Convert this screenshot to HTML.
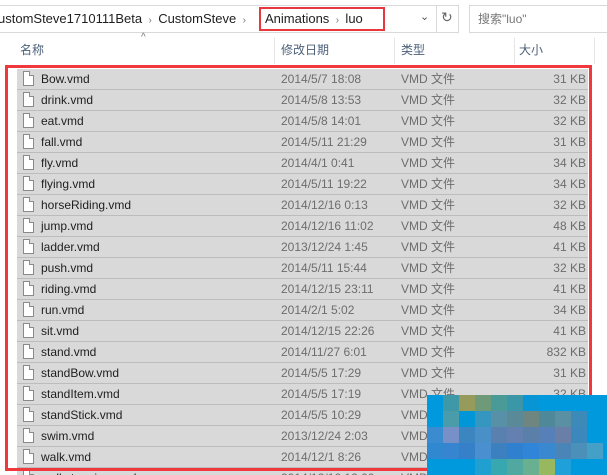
<!DOCTYPE html>
<html><head><meta charset="utf-8"><style>
*{margin:0;padding:0;box-sizing:border-box}
html,body{width:607px;height:475px;overflow:hidden}
body{background:#fff;position:relative;font-family:"Liberation Sans","Noto Sans CJK SC",sans-serif;font-size:12px;color:#1e1e1e}
.abs{position:absolute}
.addr{left:-1px;top:5px;width:460px;height:28px;border:1px solid #d9d9d9;border-left:none}
.search{left:469px;top:5px;width:140px;height:28px;border:1px solid #d9d9d9}
.crumb{top:11px;font-size:13px;line-height:16px;color:#1e1e1e;white-space:nowrap}
.sep{color:#777;font-size:10px}
.hdr{top:43px;color:#4c607a;font-size:12px;line-height:14px}
.vl{top:38px;width:1px;height:26px;background:#e5e5e5}
.row{position:absolute;left:17px;width:571px;height:21px;background:#d9d9d9;border-bottom:1px solid #bcbcbc}
.row span{position:absolute;top:3px;white-space:nowrap;line-height:14px;height:14px}
.n{left:24px;color:#1e1e1e}
.d{left:264px;color:#6d6d6d}
.t{left:384px;color:#6d6d6d}
.s{right:2px;color:#6d6d6d}
.ic{position:absolute;left:6px;top:2px;width:11px;height:15px;background:#fff;border:1px solid #8a8a8a}
.ic:after{content:"";position:absolute;right:-1px;top:-1px;width:4px;height:4px;background:#d9d9d9;border-left:1px solid #8a8a8a;border-bottom:1px solid #8a8a8a}
.mos{position:absolute;left:427px;top:395px;width:180px;height:80px;background:#0099dd;display:grid;grid-template-columns:repeat(11,16px);grid-auto-rows:16px}
</style></head><body>
<div class="abs addr"></div>
<div class="abs crumb" style="left:-2px">ustomSteve1710111Beta <span class="sep">&nbsp;›&nbsp;</span> CustomSteve <span class="sep">&nbsp;›&nbsp;</span></div>
<div class="abs crumb" style="left:265px">Animations <span class="sep">&nbsp;›&nbsp;</span> luo</div>
<div class="abs" style="left:259px;top:7px;width:126px;height:24px;border:2px solid #e8383d"></div>
<div class="abs" style="left:420px;top:10px;color:#555;font-size:11px">⌄</div>
<div class="abs" style="left:436px;top:5px;width:1px;height:28px;background:#d9d9d9"></div>
<div class="abs" style="left:441px;top:9px;color:#666;font-size:14px">↻</div>
<div class="abs search"></div>
<div class="abs" style="left:478px;top:11px;color:#777;font-size:12px;line-height:16px">搜索"luo"</div>
<div class="abs" style="left:141px;top:32px;color:#777;font-size:10px">^</div>
<div class="abs hdr" style="left:20px">名称</div>
<div class="abs vl" style="left:274px"></div>
<div class="abs hdr" style="left:281px">修改日期</div>
<div class="abs vl" style="left:394px"></div>
<div class="abs hdr" style="left:401px">类型</div>
<div class="abs vl" style="left:514px"></div>
<div class="abs hdr" style="left:519px">大小</div>
<div class="abs vl" style="left:594px"></div>
<div id="rows"></div>
<div class="row" style="top:468px"><div class="ic"></div><span class="n">walkstopping.vmd</span><span class="d">2014/12/16 12:00</span><span class="t">VMD 文件</span></div>
<div class="abs" style="left:5px;top:65px;width:587px;height:406px;border:3px solid #f0393c"></div>
<div class="mos" id="mos"></div>
<script>
var d=[["Bow","2014/5/7 18:08","31"],["drink","2014/5/8 13:53","32"],["eat","2014/5/8 14:01","32"],["fall","2014/5/11 21:29","31"],["fly","2014/4/1 0:41","34"],["flying","2014/5/11 19:22","34"],["horseRiding","2014/12/16 0:13","32"],["jump","2014/12/16 11:02","48"],["ladder","2013/12/24 1:45","41"],["push","2014/5/11 15:44","32"],["riding","2014/12/15 23:11","41"],["run","2014/2/1 5:02","34"],["sit","2014/12/15 22:26","41"],["stand","2014/11/27 6:01","832"],["standBow","2014/5/5 17:29","31"],["standItem","2014/5/5 17:19","32"],["standStick","2014/5/5 10:29","32"],["swim","2013/12/24 2:03","32"],["walk","2014/12/1 8:26","32"]];
var h="";d.forEach(function(r,i){h+='<div class="row" style="top:'+(69+21*i)+'px"><div class="ic"></div><span class="n">'+r[0]+'.vmd</span><span class="d">'+r[1]+'</span><span class="t">VMD 文件</span><span class="s">'+r[2]+' KB</span></div>'});
document.getElementById("rows").innerHTML=h;
var B="#0099dd",m=[[B,"#3e98a8","#969a5a","#6e9a7a","#4a9a98","#3b97a8","#0895d5",B,B,B,B],
[B,"#4a9cab","#0096d8","#3596c0","#5890a8","#5a8a98","#6e8580","#4f8898","#5a8fa4","#3b8ab8",B],
["#3b8bd0","#7890c8","#3b85c0","#4a90c8","#5a80b0","#6480b0","#5a7fa8","#5880b8","#6a7fa8","#3a88bc",B],
["#3088d0","#3585d0","#3580c8","#4a90d0","#3c80c0","#3080d0","#3085d8","#3a88d0","#4a85b8","#4a90b8","#45a0c8"],
[B,B,B,"#20a0d0","#38a8b0","#50a8a0","#68b090","#98b860","#20a0d8",B,B]];
var g="";m.forEach(function(r){r.forEach(function(c){g+='<div style="background:'+c+'"></div>'})});
document.getElementById("mos").innerHTML=g;
</script>
</body></html>
